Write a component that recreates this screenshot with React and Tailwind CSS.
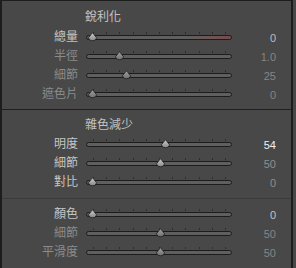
import React from "react";

const CJK = { fontFamily: '"Noto Sans CJK TC", "Noto Sans", sans-serif' };
const NUM = { fontFamily: '"Liberation Sans", Arial, sans-serif' };

const Thumb = ({ pct, dim }) => (
  <svg
    width="11"
    height="11"
    viewBox="0 0 11 11"
    className="absolute top-[calc(50%-6px)]"
    style={{ left: 6 + pct * 136 - 5.5 }}
  >
    <defs>
      <linearGradient id={dim ? "thd" : "thb"} x1="0" y1="0" x2="0" y2="1">
        <stop offset="0" stopColor={dim ? "#a4a4a4" : "#cfcfcf"} />
        <stop offset="1" stopColor={dim ? "#6e6e6e" : "#868686"} />
      </linearGradient>
    </defs>
    <path
      d="M5.5 0.6 L9.6 5.8 A4.2 3.9 0 0 1 1.4 5.8 Z"
      fill={`url(#${dim ? "thd" : "thb"})`}
      stroke="#242424"
      strokeWidth="0.9"
    />
  </svg>
);

const Slider = ({ pct, dim, red }) => (
  <div className="relative ml-[8px] w-[146px] h-[19px] flex items-center">
    <div className="absolute left-[7px] right-[6px] top-[calc(50%-6px)] flex justify-between">
      {Array.from({ length: 11 }).map((_, i) => (
        <div key={i} className="w-px h-[2px] bg-[#2e2e2e]" />
      ))}
    </div>
    <div
      className={
        "w-full h-[5px] rounded-full border border-[#1c1c1c] " +
        (red
          ? "bg-gradient-to-r from-[#5f5f5f] via-[#5f5f5f] via-70% to-[#7a4a4c]"
          : "bg-[#5f5f5f]")
      }
    />
    <Thumb pct={pct} dim={dim} />
  </div>
);

const Row = ({ label, pct, value, dim, valueClass, red }) => (
  <div className="flex items-center h-[19px]">
    <div
      style={CJK}
      className={
        "w-[76px] text-right text-[12px] leading-[16px] mb-[3px] " +
        (dim ? "text-[#8b8b8b]" : "text-[#c4c4c4]")
      }
    >
      {label}
    </div>
    <Slider pct={pct} dim={dim} red={red} />
    <div style={NUM} className={"w-[44px] text-right text-[11px] leading-[14px] " + valueClass}>
      {value}
    </div>
  </div>
);

const Header = ({ children }) => (
  <div style={CJK} className="pl-[83px] text-[12px] leading-[16px] text-[#c2c2c2]">
    {children}
  </div>
);

export default function App() {
  return (
    <div className="w-[296px] h-[268px] bg-[#484848] flex overflow-hidden">
      <div className="w-[293px] h-full border-l-2 border-t border-r-2 border-[#1d1d1d] flex flex-col">
        {/* Sharpening */}
        <div className="h-[108px] pt-[7px] flex flex-col">
          <div className="h-[20px]">
            <Header>銳利化</Header>
          </div>
          <Row label="總量" pct={0} value="0" red valueClass="text-[#bdbdbd]" />
          <Row label="半徑" pct={0.2} value="1.0" dim valueClass="text-[#858585]" />
          <Row label="細節" pct={0.25} value="25" dim valueClass="text-[#858585]" />
          <Row label="遮色片" pct={0} value="0" dim valueClass="text-[#858585]" />
        </div>
        <div className="h-px bg-[#202020]" />

        {/* Noise reduction */}
        <div className="h-[88px] pt-[6px] flex flex-col">
          <div className="h-[19px]">
            <Header>雜色減少</Header>
          </div>
          <Row label="明度" pct={0.54} value="54" valueClass="text-[#f0f0f0]" />
          <Row label="細節" pct={0.5} value="50" valueClass="text-[#8e8e8e]" />
          <Row label="對比" pct={0} value="0" valueClass="text-[#8e8e8e]" />
        </div>
        <div className="h-px bg-[#3b3b3b]" />

        <div className="pt-[6px] flex flex-col">
          <Row label="顏色" pct={0} value="0" valueClass="text-[#c2c2c2]" />
          <Row label="細節" pct={0.5} value="50" dim valueClass="text-[#858585]" />
          <Row label="平滑度" pct={0.5} value="50" dim valueClass="text-[#858585]" />
        </div>
      </div>
    </div>
  );
}
